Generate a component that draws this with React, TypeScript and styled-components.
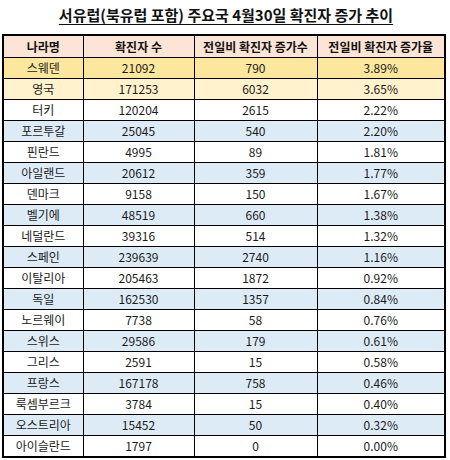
import React from "react";
import styled, { createGlobalStyle } from "styled-components";

const GlobalStyle = createGlobalStyle`
  html, body {
    margin: 0;
    padding: 0;
    background: #fff;
  }
  body {
    font-family: "Noto Sans CJK KR", "Noto Sans", sans-serif;
    color: #000;
  }
`;

const Page = styled.div`
  width: 450px;
  height: 460px;
  padding: 3px 0 0 2px;
  box-sizing: border-box;
  overflow: hidden;
`;

const Title = styled.h1`
  margin: 0 0 8px 0;
  height: 23px;
  font-size: 15px;
  line-height: 23px;
  font-weight: 700;
  text-align: center;
  text-decoration: underline;
  text-underline-offset: 3px;
  color: #111;
`;

const Table = styled.table`
  width: 442px;
  border-collapse: collapse;
  table-layout: fixed;
  border: 2px solid #000;
`;

const HeadCell = styled.th`
  height: 21px;
  padding: 0;
  background: #fce4d6;
  border: 1px solid #000;
  font-size: 12px;
  line-height: 21px;
  font-weight: 700;
  text-align: center;
  color: #111;
`;

type Tone = "gold" | "cream" | "blue" | "white";

const toneColor: Record<Tone, string> = {
  gold: "#fde79e",
  cream: "#fff2cc",
  blue: "#ddebf7",
  white: "#ffffff",
};

const Row = styled.tr<{ $tone: Tone }>`
  background: ${(p) => toneColor[p.$tone]};
`;

const Cell = styled.td`
  height: 20px;
  padding: 0;
  border: 1px solid #000;
  font-size: 12px;
  line-height: 20px;
  text-align: center;
  color: #1a1a1a;
`;

const rows: [string, number, number, string][] = [
  ["스웨덴", 21092, 790, "3.89%"],
  ["영국", 171253, 6032, "3.65%"],
  ["터키", 120204, 2615, "2.22%"],
  ["포르투갈", 25045, 540, "2.20%"],
  ["핀란드", 4995, 89, "1.81%"],
  ["아일랜드", 20612, 359, "1.77%"],
  ["덴마크", 9158, 150, "1.67%"],
  ["벨기에", 48519, 660, "1.38%"],
  ["네덜란드", 39316, 514, "1.32%"],
  ["스페인", 239639, 2740, "1.16%"],
  ["이탈리아", 205463, 1872, "0.92%"],
  ["독일", 162530, 1357, "0.84%"],
  ["노르웨이", 7738, 58, "0.76%"],
  ["스위스", 29586, 179, "0.61%"],
  ["그리스", 2591, 15, "0.58%"],
  ["프랑스", 167178, 758, "0.46%"],
  ["룩셈부르크", 3784, 15, "0.40%"],
  ["오스트리아", 15452, 50, "0.32%"],
  ["아이슬란드", 1797, 0, "0.00%"],
];

const toneFor = (i: number): Tone => {
  if (i === 0) return "gold";
  if (i === 1) return "cream";
  return i % 2 === 1 ? "blue" : "white";
};

export default function App() {
  return (
    <>
      <GlobalStyle />
      <Page>
        <Title>서유럽(북유럽 포함) 주요국 4월30일 확진자 증가 추이</Title>
        <Table>
          <colgroup>
            <col style={{ width: 80 }} />
            <col style={{ width: 111 }} />
            <col style={{ width: 123 }} />
            <col style={{ width: 128 }} />
          </colgroup>
          <thead>
            <tr>
              <HeadCell>나라명</HeadCell>
              <HeadCell>확진자 수</HeadCell>
              <HeadCell>전일비 확진자 증가수</HeadCell>
              <HeadCell>전일비 확진자 증가율</HeadCell>
            </tr>
          </thead>
          <tbody>
            {rows.map(([name, total, diff, rate], i) => (
              <Row key={name} $tone={toneFor(i)}>
                <Cell>{name}</Cell>
                <Cell>{total}</Cell>
                <Cell>{diff}</Cell>
                <Cell>{rate}</Cell>
              </Row>
            ))}
          </tbody>
        </Table>
      </Page>
    </>
  );
}
